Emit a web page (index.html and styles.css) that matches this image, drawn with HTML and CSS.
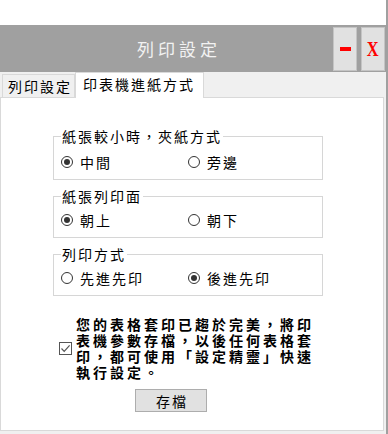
FILE: index.html
```html
<!DOCTYPE html>
<html lang="zh-Hant">
<head>
<meta charset="utf-8">
<title>列印設定</title>
<link rel="stylesheet" href="styles.css">
</head>
<body>
<div class="frame">
  <div class="window">
    <div class="titlebar">
      <div class="title">列印設定</div>
      <div class="winbtn"><span class="dash"></span></div>
      <div class="winbtn close"><span class="x">X</span></div>
    </div>
    <div class="tabs">
      <div class="tab">列印設定</div>
      <div class="tab active">印表機進紙方式</div>
    </div>
    <div class="panel">
      <fieldset class="group first">
        <legend>紙張較小時，夾紙方式</legend>
        <div class="opts">
          <div class="opt"><span class="radio on"></span>中間</div>
          <div class="opt"><span class="radio"></span>旁邊</div>
        </div>
      </fieldset>
      <fieldset class="group">
        <legend>紙張列印面</legend>
        <div class="opts">
          <div class="opt"><span class="radio on"></span>朝上</div>
          <div class="opt"><span class="radio"></span>朝下</div>
        </div>
      </fieldset>
      <fieldset class="group">
        <legend>列印方式</legend>
        <div class="opts">
          <div class="opt"><span class="radio"></span>先進先印</div>
          <div class="opt"><span class="radio on"></span>後進先印</div>
        </div>
      </fieldset>
      <div class="note">
        <span class="check"><svg width="11" height="11" viewBox="0 0 11 11"><polyline points="1.5,5.5 4.2,8.3 9.6,2.4" fill="none" stroke="#555" stroke-width="1.2"/></svg></span>
        <p class="note-text">您的表格套印已趨於完美，將印<br>表機參數存檔，以後任何表格套<br>印，都可使用「設定精靈」快速<br>執行設定。</p>
      </div>
      <button class="save">存檔</button>
    </div>
  </div>
</div>
</body>
</html>
```
FILE: styles.css
```css
* { box-sizing: border-box; }
html, body { margin: 0; padding: 0; background: #fff; }
body {
  font-family: "Noto Sans CJK TC", "Noto Sans", sans-serif;
  color: #000;
}
.frame {
  width: 388px;
  height: 434px;
  padding-top: 25px;
  border-right: 2px solid #a0a0a0;
}
.window {
  height: 409px;
  background: #f0f0f0;
  display: flex;
  flex-direction: column;
}
.titlebar {
  height: 47px;
  flex: none;
  background: #a0a0a0;
  display: flex;
  align-items: flex-start;
  padding-top: 2px;
  padding-right: 1px;
}
.title {
  flex: 1;
  align-self: stretch;
  margin-top: -2px;
  display: flex;
  align-items: center;
  justify-content: center;
  padding-left: 25px;
  font-size: 17px;
  letter-spacing: 4px;
  line-height: 20px;
  color: #f2f2f2;
}
.winbtn {
  width: 24px;
  height: 44px;
  background: #e1e1e1;
  border: 1px solid #c4c4c4;
  display: flex;
  align-items: center;
  justify-content: center;
}
.winbtn.close { margin-left: 4px; }
.dash {
  width: 11px;
  height: 4px;
  background: #f00;
}
.x {
  font-family: "Liberation Serif", serif;
  font-weight: bold;
  font-size: 21px;
  line-height: 20px;
  color: #f00;
  transform: scaleX(0.78);
}
.tabs {
  height: 25px;
  flex: none;
  display: flex;
  align-items: flex-end;
  padding-left: 2px;
}
.tab {
  height: 23px;
  padding: 0 2px 0 5px;
  border: 1px solid #d9d9d9;
  border-bottom: none;
  background: #f0f0f0;
  font-size: 14px;
  letter-spacing: 2px;
  line-height: 22px;
  white-space: nowrap;
}
.tab.active {
  height: 26px;
  margin-bottom: -1px;
  padding: 0 8px 0 7px;
  background: #fff;
  line-height: 23px;
  position: relative;
  z-index: 1;
}
.panel {
  width: 384px;
  height: 334px;
  flex: none;
  background: #fff;
  border: 1px solid #d9d9d9;
  padding-top: 30px;
}
.group {
  margin: 8px 0 0 52px;
  width: 265px;
  border: 1px solid #d6d6d6;
  padding: 0 7px 9px;
}
.group.first { margin-top: 0; }
.group legend {
  padding: 0 1px;
  font-size: 14px;
  letter-spacing: 2px;
  line-height: 16px;
  white-space: nowrap;
}
.opts {
  display: flex;
  align-items: center;
  height: 16px;
  margin-top: 8px;
}
.group.first .opts { margin-top: 10px; }
.opt {
  width: 127px;
  display: flex;
  align-items: center;
  gap: 7px;
  font-size: 14px;
  letter-spacing: 2px;
  line-height: 16px;
  white-space: nowrap;
}
.radio {
  width: 12px;
  height: 12px;
  flex: none;
  border: 1px solid #333;
  border-radius: 50%;
  background: #fff;
  display: flex;
  align-items: center;
  justify-content: center;
}
.radio.on::after {
  content: "";
  width: 6px;
  height: 6px;
  border-radius: 50%;
  background: #333;
}
.note {
  display: flex;
  align-items: center;
  gap: 4px;
  margin: 20px 0 0 58px;
}
.check {
  width: 13px;
  height: 13px;
  flex: none;
  border: 1px solid #555;
  display: flex;
  align-items: center;
  justify-content: center;
  background: #fff;
}
.note-text {
  margin: 0;
  font-size: 14px;
  font-weight: bold;
  letter-spacing: 3px;
  line-height: 16px;
  white-space: nowrap;
}
.save {
  display: block;
  margin: 9px 0 0 134px;
  width: 72px;
  height: 23px;
  padding: 0 0 0 2px;
  background: #e1e1e1;
  border: 1px solid #adadad;
  border-radius: 0;
  font-family: "Noto Sans CJK TC", sans-serif;
  font-size: 14px;
  letter-spacing: 2px;
  line-height: 20px;
  color: #000;
}
```
